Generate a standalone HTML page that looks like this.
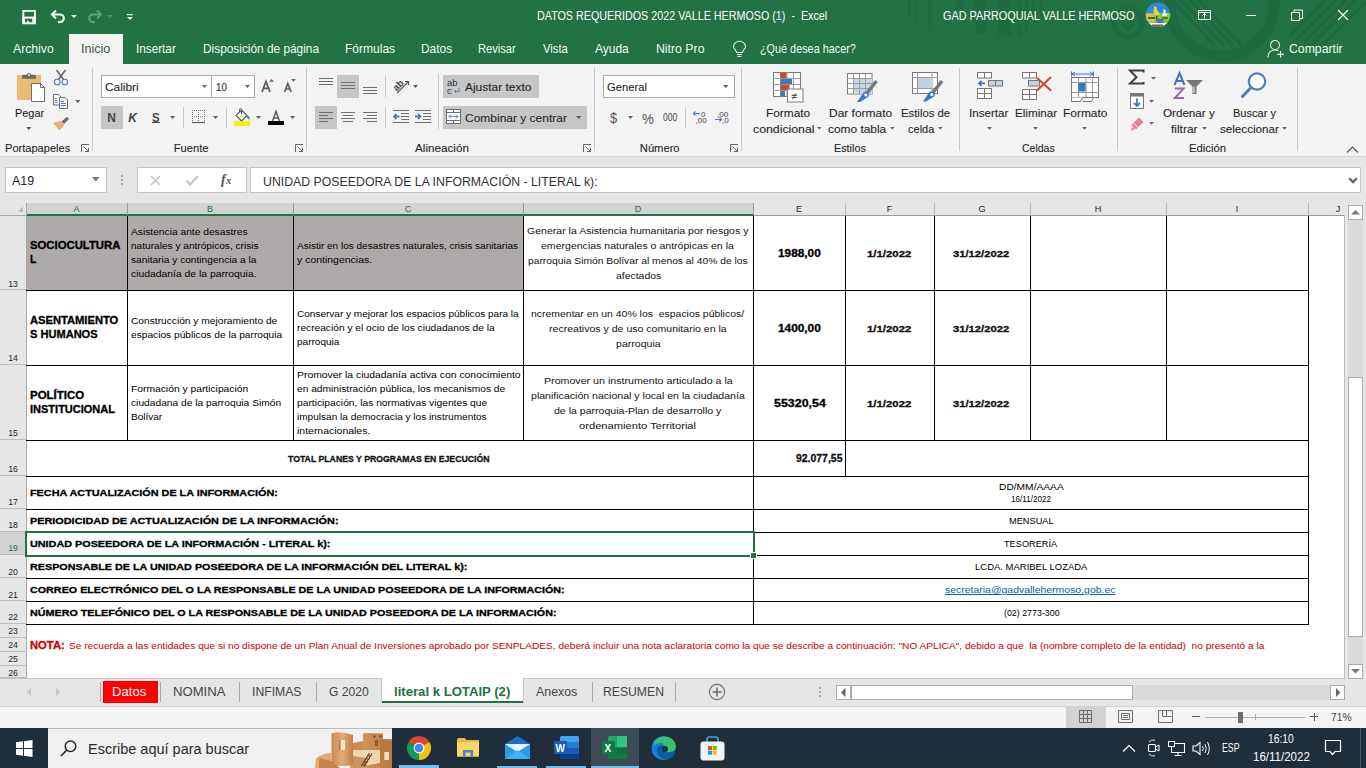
<!DOCTYPE html>
<html><head><meta charset="utf-8"><title>Excel</title>
<style>
*{margin:0;padding:0;box-sizing:border-box}
html,body{width:1366px;height:768px;overflow:hidden;background:#fff;font-family:"Liberation Sans",sans-serif}
.a{position:absolute}
.x{position:absolute;white-space:nowrap;line-height:1;transform-origin:0 0;font-family:"Liberation Sans",sans-serif}
.hl{position:absolute;height:1px;background:#000}
.vl{position:absolute;width:1px;background:#000}
.sep{position:absolute;width:1px;background:#c8c8c8}
.box{position:absolute;background:#fff;border:1px solid #c6c6c6}
.ch{position:absolute;top:203px;height:11px;border-right:1px solid #bdbdbd}
.rh{position:absolute;left:0;width:26px;background:#e6e6e6;border-bottom:1px solid #bdbdbd;border-right:1px solid #bdbdbd}
.cl{position:absolute;font-size:9px;line-height:1;color:#262626;text-align:center;font-family:"Liberation Sans",sans-serif}
.rn{position:absolute;left:0;width:26px;font-size:8.7px;line-height:1;color:#262626;text-align:center}
svg{position:absolute;overflow:visible}

</style></head><body>
<!-- title bar -->
<div class="a" style="left:0;top:0;width:1366px;height:64px;background:#217346"></div>
<div class="a" style="left:69px;top:34px;width:54px;height:30px;background:#f3f3f3"></div>

<!-- title pattern -->
<svg style="left:880px;top:0" width="486" height="64" viewBox="0 0 486 64">
 <g fill="#1e6a40" opacity="0.75">
  <rect x="28" y="0" width="3" height="15"/>
  <rect x="35" y="0" width="3" height="23"/>
  <rect x="48" y="0" width="4" height="31"/>
  <rect x="76" y="0" width="8" height="10"/>
  <path d="M95 0h12v28a6 6 0 0 1-12 0z"/>
  <rect x="118" y="0" width="13" height="36"/>
  <rect x="137" y="0" width="4" height="36"/>
  <rect x="145" y="0" width="3" height="30"/>
  <rect x="152" y="0" width="3" height="24"/>
  <rect x="160" y="0" width="3" height="18"/>
 </g>
 <g fill="none" stroke="#1e6a40" opacity="0.8">
  <circle cx="248" cy="23" r="14" stroke-width="5"/>
  <circle cx="248" cy="23" r="5" stroke-width="3"/>
  <circle cx="342" cy="4" r="52" stroke-width="11"/>
  <path d="M292 0 L335 46 M301 0 L344 46 M310 0 L353 46 M319 0 L362 46" stroke-width="3"/>
  <path d="M486 2 L444 44 M476 0 L432 44 M466 0 L424 42 M456 0 L416 40 M446 0 L410 36" stroke-width="3.5"/>
 </g>
</svg>
<!-- save -->
<svg style="left:21px;top:9px" width="16" height="16" viewBox="0 0 16 16">
 <path d="M2.3 1.9h11.6v12.4h-11.6z" fill="none" stroke="#fff" stroke-width="1.9"/>
 <rect x="1.5" y="7.6" width="13" height="2" fill="#fff"/>
 <rect x="1.5" y="9.5" width="2.5" height="4" fill="#fff"/>
 <rect x="11.3" y="9.5" width="3" height="4" fill="#fff"/>
 <rect x="5.8" y="11.8" width="2" height="2" fill="#fff"/>
</svg>
<!-- undo -->
<svg style="left:50px;top:9px" width="17" height="16" viewBox="0 0 17 16">
 <path d="M6 1.5 L2 5.5 L6 9.5 M2.5 5.5 H10 a3.8 3.8 0 0 1 0 7.6 H8" fill="none" stroke="#f2f8f4" stroke-width="2.1"/>
</svg>
<svg style="left:71px;top:15px" width="6" height="4" viewBox="0 0 6 4"><path d="M0 0h6l-3 3z" fill="#fff"/></svg>
<svg style="left:86px;top:9px" width="17" height="16" viewBox="0 0 17 16">
 <path d="M11 1.5 L15 5.5 L11 9.5 M14.5 5.5 H7 a3.8 3.8 0 0 0 0 7.6 H9" fill="none" stroke="#5e9e78" stroke-width="2.1"/>
</svg>
<svg style="left:107px;top:15px" width="6" height="4" viewBox="0 0 6 4"><path d="M0 0h6l-3 3z" fill="#4e8f68"/></svg>
<svg style="left:127px;top:13px" width="6" height="8" viewBox="0 0 6 8"><rect x="0" y="1" width="5.5" height="1.2" fill="#fff"/><path d="M0 4h6l-3 3z" fill="#fff"/></svg>
<!-- avatar -->
<svg style="left:1145px;top:2px" width="26" height="26" viewBox="0 0 26 26">
 <defs><clipPath id="av"><circle cx="13" cy="12.8" r="12.2"/></clipPath></defs>
 <g clip-path="url(#av)">
  <rect width="26" height="26" fill="#2f8ae6"/>
  <rect y="11" width="26" height="10" fill="#8cc43c"/>
  <path d="M0 12 Q6 10 10 14 L10 20 L0 20z" fill="#d9c04a"/>
  <path d="M9 4.5 L11.5 5 L12.5 9 L14.5 11 L14 13 L9 13 L8.5 9z" fill="#e8d23e"/>
  <path d="M19 7 L21 9 L20 11 L23 12 L21 14 L17 14 L18 11z" fill="#e8f4e0"/>
  <rect x="3" y="15" width="7" height="2" fill="#3d6a1e"/>
  <rect x="11" y="14" width="1.5" height="5" fill="#2f5e1a"/>
  <rect x="17" y="15" width="6" height="2" fill="#4f7a2a"/>
  <path d="M11 17 L19 17 L18 21 L12 21z" fill="#3d78c8"/>
  <rect y="21" width="26" height="6" fill="#f5f5f5"/>
  <rect x="7" y="22.5" width="11" height="2.5" fill="#8a5a4a"/>
 </g>
</svg>
<!-- ribbon display -->
<svg style="left:1197px;top:9px" width="15" height="12" viewBox="0 0 15 12">
 <path d="M1.5 1.5h12v9h-12z M1.5 3.5h12 M7.5 9.5v-5 M5.5 6.5l2-2 2 2" fill="none" stroke="#fff" stroke-width="1"/>
</svg>
<div class="a" style="left:1246px;top:15px;width:10px;height:1px;background:#fff"></div>
<svg style="left:1291px;top:9px" width="12" height="12" viewBox="0 0 12 12">
 <path d="M0.5 3.5h8v8h-8z M3 3.5v-2.5h8.5v8.5h-3" fill="none" stroke="#fff" stroke-width="1"/>
</svg>
<svg style="left:1337px;top:9px" width="12" height="12" viewBox="0 0 12 12">
 <path d="M1 1L11 11M11 1L1 11" stroke="#fff" stroke-width="1.1"/>
</svg>
<!-- lightbulb -->
<svg style="left:732px;top:41px" width="15" height="17" viewBox="0 0 15 17">
 <path d="M4.5 11.5 C4.5 9 1.5 8 1.5 5.5 A6 5.2 0 0 1 13.5 5.5 C13.5 8 10.5 9 10.5 11.5z M5 13.5h5 M5.5 15.5h4" fill="none" stroke="#e8f2ec" stroke-width="1.1"/>
</svg>
<!-- person -->
<svg style="left:1267px;top:39px" width="18" height="19" viewBox="0 0 18 19">
 <circle cx="8" cy="6" r="4.5" fill="none" stroke="#eef6f1" stroke-width="1.2"/>
 <path d="M1 18.5 C1 13.5 4 11 8 11 C9.5 11 10.5 11.3 11.5 11.8" fill="none" stroke="#eef6f1" stroke-width="1.2"/>
 <path d="M13.5 12v6.5 M10.3 15.3h6.5" stroke="#eef6f1" stroke-width="1.2"/>
</svg>

<!-- ribbon -->
<div class="a" style="left:0;top:64px;width:1366px;height:92px;background:#f3f3f3"></div>
<div class="a" style="left:0;top:156px;width:1366px;height:1px;background:#d6d6d6"></div>
<div class="sep" style="left:92px;top:68px;height:83px"></div>
<div class="sep" style="left:306px;top:68px;height:83px"></div>
<div class="sep" style="left:594px;top:68px;height:83px"></div>
<div class="sep" style="left:741px;top:68px;height:83px"></div>
<div class="sep" style="left:959px;top:68px;height:83px"></div>
<div class="sep" style="left:1117px;top:68px;height:83px"></div>
<div class="sep" style="left:1297px;top:68px;height:83px"></div>
<!-- ===== ribbon icons ===== -->
<!-- clipboard -->
<svg style="left:17px;top:71px" width="29" height="32" viewBox="0 0 29 32">
 <rect x="0" y="4" width="24" height="25" fill="#e6bd73"/>
 <path d="M5 7.8h14v-2.5a1.5 1.5 0 0 0-1.5-1.5h-3.2a2.4 2.4 0 0 0-4.6 0h-3.2a1.5 1.5 0 0 0-1.5 1.5z" fill="#6b6b6b"/>
 <circle cx="12" cy="4" r="1" fill="#f3f3f3"/>
 <path d="M14.5 12.5h9l4 4v14h-13z" fill="#fff" stroke="#6e6e6e" stroke-width="1"/>
 <path d="M23.5 12.5v4h4" fill="none" stroke="#6e6e6e" stroke-width="1"/>
</svg>
<svg style="left:26px;top:127px" width="6" height="4" viewBox="0 0 6 4"><path d="M0 0h5.5l-2.75 3z" fill="#5e5e5e"/></svg>
<!-- scissors -->
<svg style="left:53px;top:69px" width="16" height="17" viewBox="0 0 16 17">
 <path d="M3.5 1 L10.5 10.5 M12.5 1 L5.5 10.5" stroke="#6d6d6d" stroke-width="1.7"/>
 <circle cx="4.2" cy="13" r="2.8" fill="#f3f3f3" stroke="#4d7fbd" stroke-width="1.1"/>
 <circle cx="11.8" cy="13" r="2.8" fill="#f3f3f3" stroke="#4d7fbd" stroke-width="1.1"/>
</svg>
<!-- copy -->
<svg style="left:52px;top:93px" width="17" height="16" viewBox="0 0 17 16">
 <path d="M1.5 1.5h5l2 2v8.5h-7z" fill="#fff" stroke="#6e6e6e" stroke-width="1"/>
 <path d="M7.5 4.5h5.5l2.5 2.5v8.5h-8z" fill="#fff" stroke="#6e6e6e" stroke-width="1"/>
 <path d="M3 5.5h2M3 7.5h2.5M3 9.5h2.5M9 8.5h3M9 10.5h5M9 12.5h5" stroke="#4d7fbd" stroke-width="1"/>
</svg>
<svg style="left:75px;top:100px" width="6" height="4" viewBox="0 0 6 4"><path d="M0 0h5.5l-2.75 3z" fill="#5e5e5e"/></svg>
<!-- brush -->
<svg style="left:52px;top:116px" width="18" height="16" viewBox="0 0 18 16">
 <path d="M9.5 5.5 L15 0.8 L17 3 L12 8z" fill="#6b6b6b"/>
 <path d="M8.5 4.8 L12.5 8.8 L7.5 14.5 L1 7z" fill="#e3b46d"/>
</svg>
<!-- font boxes -->
<div class="box" style="left:101px;top:75px;width:111px;height:23px;border-color:#ababab"></div>
<div class="box" style="left:211px;top:75px;width:44px;height:23px;border-color:#ababab"></div>
<svg style="left:202px;top:85px" width="6" height="4" viewBox="0 0 6 4"><path d="M0 0h5l-2.5 3z" fill="#5e5e5e"/></svg>
<svg style="left:245px;top:85px" width="6" height="4" viewBox="0 0 6 4"><path d="M0 0h5l-2.5 3z" fill="#5e5e5e"/></svg>
<!-- grow/shrink A -->
<svg style="left:260px;top:78px" width="38" height="15" viewBox="0 0 38 15">
 <path d="M2 14 L6 3.5 L10 14 M3.5 10.3h5" fill="none" stroke="#5c5c5c" stroke-width="1.8"/>
 <path d="M9 3.8h5l-2.5-2.8z" fill="#4f6f97"/>
 <path d="M24.5 14 L27.8 5.5 L31.1 14 M25.8 11h4" fill="none" stroke="#5c5c5c" stroke-width="1.7"/>
 <path d="M31 1h5l-2.5 2.8z" fill="#4f6f97"/>
</svg>
<!-- N K S -->
<div class="a" style="left:101px;top:106px;width:22px;height:23px;background:#c6c6c6"></div>
<div class="x" style="left:107.2px;top:112.2px;font-size:12px;font-weight:700;color:#444">N</div>
<div class="x" style="left:128.3px;top:112.2px;font-size:12px;font-weight:700;font-style:italic;color:#444">K</div>
<div class="x" style="left:152.2px;top:112.2px;font-size:12px;font-weight:700;color:#444;transform:scaleX(0.95)">S</div>
<div class="a" style="left:152px;top:122px;width:8px;height:1px;background:#444"></div>
<svg style="left:170px;top:116px" width="6" height="4" viewBox="0 0 6 4"><path d="M0 0h5l-2.5 3z" fill="#5e5e5e"/></svg>
<div class="sep" style="left:183px;top:107px;height:21px"></div>
<!-- border icon -->
<svg style="left:191px;top:109px" width="15" height="15" viewBox="0 0 15 15">
 <path d="M1.5 1V12M7.5 1V12M13.5 1V12M1 1.5H14M1 7.5H14" stroke="#777" stroke-width="1" stroke-dasharray="1 1"/>
 <path d="M1 13.5H14" stroke="#5c5c5c" stroke-width="1.2"/>
</svg>
<svg style="left:213px;top:116px" width="6" height="4" viewBox="0 0 6 4"><path d="M0 0h5l-2.5 3z" fill="#5e5e5e"/></svg>
<div class="sep" style="left:226px;top:107px;height:21px"></div>
<!-- fill icon -->
<svg style="left:233px;top:108px" width="19" height="19" viewBox="0 0 19 19">
 <path d="M8.5 2 L14 7.5 L8.5 13 L3 7.5z" fill="#fff" stroke="#555" stroke-width="1.1"/>
 <path d="M6.5 4V1.5a1 1 0 0 1 2 0V6" fill="none" stroke="#555" stroke-width="1"/>
 <path d="M14 7 Q17.5 8.5 16.5 12 Q15 10.5 14 10z" fill="#4d7fbd"/>
 <rect x="1" y="13" width="16" height="5" fill="#f2f20a"/>
</svg>
<svg style="left:256px;top:116px" width="6" height="4" viewBox="0 0 6 4"><path d="M0 0h5l-2.5 3z" fill="#5e5e5e"/></svg>
<!-- font color -->
<svg style="left:267px;top:110px" width="18" height="16" viewBox="0 0 18 16">
 <path d="M5.5 11 L9 1.5 L12.5 11 M6.8 8h4.4" fill="none" stroke="#5c5c5c" stroke-width="1.5"/>
 <rect x="1" y="11" width="16" height="4" fill="#000"/>
</svg>
<svg style="left:290px;top:116px" width="6" height="4" viewBox="0 0 6 4"><path d="M0 0h5l-2.5 3z" fill="#5e5e5e"/></svg>
<!-- dialog launchers -->
<svg style="left:81px;top:144px" width="9" height="9" viewBox="0 0 9 9"><path d="M0.5 8V0.5H8 M2.5 2.5L7.5 7.5 M4 7.5H7.5V4" fill="none" stroke="#666" stroke-width="1"/></svg>
<svg style="left:295px;top:144px" width="9" height="9" viewBox="0 0 9 9"><path d="M0.5 8V0.5H8 M2.5 2.5L7.5 7.5 M4 7.5H7.5V4" fill="none" stroke="#666" stroke-width="1"/></svg>
<svg style="left:583px;top:144px" width="9" height="9" viewBox="0 0 9 9"><path d="M0.5 8V0.5H8 M2.5 2.5L7.5 7.5 M4 7.5H7.5V4" fill="none" stroke="#666" stroke-width="1"/></svg>
<svg style="left:730px;top:144px" width="9" height="9" viewBox="0 0 9 9"><path d="M0.5 8V0.5H8 M2.5 2.5L7.5 7.5 M4 7.5H7.5V4" fill="none" stroke="#666" stroke-width="1"/></svg>
<!-- alignment -->
<div class="a" style="left:337px;top:75px;width:22px;height:23px;background:#c6c6c6"></div>
<div class="a" style="left:315px;top:106px;width:22px;height:23px;background:#c6c6c6"></div>
<svg style="left:318px;top:77px" width="62" height="18" viewBox="0 0 62 18">
 <g stroke="#6e6e6e" stroke-width="1">
 <path d="M1 1.5h14M1 4.5h14M1 7.5h14"/>
 <path d="M23 5.5h14M23 8.5h14M23 11.5h14"/>
 <path d="M45 10.5h14M45 13.5h14M45 16.5h14"/>
 </g>
</svg>
<svg style="left:318px;top:111px" width="62" height="12" viewBox="0 0 62 12">
 <g stroke="#6e6e6e" stroke-width="1">
 <path d="M1 1.5h14M1 4.5h9M1 7.5h14M1 10.5h9"/>
 <path d="M23 1.5h14M25 4.5h10M23 7.5h14M25 10.5h10"/>
 <path d="M45 1.5h14M49 4.5h10M45 7.5h14M49 10.5h10"/>
 </g>
</svg>
<div class="sep" style="left:385px;top:76px;height:21px"></div>
<div class="sep" style="left:385px;top:107px;height:21px"></div>
<!-- orientation -->
<svg style="left:392px;top:78px" width="27" height="16" viewBox="0 0 27 16">
 <text x="0" y="0" transform="translate(4.5 13.5) rotate(-45)" font-family="Liberation Sans" font-size="9.5" font-weight="700" fill="#444">ab</text>
 <path d="M5 15 L16 4 M13 3.5h3.5v3.5" fill="none" stroke="#555" stroke-width="1.1"/>
 <path d="M21 7h5l-2.5 3z" fill="#5e5e5e"/>
</svg>
<!-- indents -->
<svg style="left:392px;top:109px" width="40" height="15" viewBox="0 0 40 15">
 <g stroke="#6e6e6e" stroke-width="1"><path d="M1 1.5h16M9 4.5h8M9 7.5h8M9 10.5h8M1 13.5h16"/><path d="M23 1.5h16M31 4.5h8M31 7.5h8M31 10.5h8M23 13.5h16"/></g>
 <path d="M7.5 7.5H2 M4.5 5 L2 7.5 L4.5 10" fill="none" stroke="#4d7fbd" stroke-width="1.8"/>
 <path d="M23 7.5H28.5 M26 5 L28.5 7.5 L26 10" fill="none" stroke="#4d7fbd" stroke-width="1.8"/>
</svg>
<div class="sep" style="left:438px;top:74px;height:55px"></div>
<!-- ajustar / combinar -->
<div class="a" style="left:443px;top:75px;width:96px;height:23px;background:#c6c6c6"></div>
<div class="a" style="left:443px;top:106px;width:144px;height:23px;background:#c6c6c6"></div>
<svg style="left:447px;top:78px" width="14" height="17" viewBox="0 0 14 17">
 <text x="0" y="7.5" font-family="Liberation Sans" font-size="9.5" fill="#333">ab</text>
 <text x="0" y="15.5" font-family="Liberation Sans" font-size="9.5" fill="#333">c</text>
 <path d="M12 10v3.5H7.5 M9 12l-1.5 1.5L9 15" fill="none" stroke="#4d7fbd" stroke-width="0.9"/>
</svg>
<svg style="left:446px;top:109px" width="15" height="15" viewBox="0 0 15 15">
 <rect x="0.5" y="0.5" width="14" height="14" fill="#fff" stroke="#6e6e6e"/>
 <path d="M0.5 3.5h14M0.5 11.5h14M7.5 0.5v3M7.5 11.5v3" stroke="#6e6e6e"/>
 <path d="M3 7.5h9M5 5.5l-2 2 2 2M10 5.5l2 2-2 2" fill="none" stroke="#4d7fbd" stroke-width="0.9"/>
</svg>
<svg style="left:576px;top:116px" width="6" height="4" viewBox="0 0 6 4"><path d="M0 0h5.5l-2.75 3z" fill="#5e5e5e"/></svg>
<!-- numero -->
<div class="box" style="left:603px;top:75px;width:132px;height:23px;border-color:#ababab"></div>
<svg style="left:723px;top:85px" width="6" height="4" viewBox="0 0 6 4"><path d="M0 0h5.5l-2.75 3z" fill="#5e5e5e"/></svg>
<div class="x" style="left:609.5px;top:110px;font-size:15px;color:#555;transform:scaleX(0.85)">$</div>
<svg style="left:628px;top:116px" width="6" height="4" viewBox="0 0 6 4"><path d="M0 0h5l-2.5 3z" fill="#5e5e5e"/></svg>
<div class="x" style="left:641.5px;top:111.5px;font-size:14px;color:#555;transform:scaleX(0.95)">%</div>
<div class="x" style="left:662.5px;top:112.5px;font-size:10px;color:#444;transform:scaleX(0.85)">000</div>
<div class="sep" style="left:685px;top:107px;height:21px"></div>
<svg style="left:692px;top:109px" width="40" height="16" viewBox="0 0 40 16">
 <text x="9" y="7.5" font-family="Liberation Sans" font-size="8" fill="#444">0</text>
 <text x="3.5" y="14" font-family="Liberation Sans" font-size="8" fill="#444">,00</text>
 <path d="M8 4.5H1.5M3.5 2.5L1.5 4.5L3.5 6.5" fill="none" stroke="#4d7fbd" stroke-width="1.2"/>
 <text x="25" y="7.5" font-family="Liberation Sans" font-size="8" fill="#444">,00</text>
 <text x="30" y="14" font-family="Liberation Sans" font-size="8" fill="#444">,0</text>
 <path d="M23 10.5H29.5M27.5 8.5L29.5 10.5L27.5 12.5" fill="none" stroke="#4d7fbd" stroke-width="1.2"/>
</svg>
<!-- formato condicional -->
<svg style="left:773px;top:71px" width="31" height="32" viewBox="0 0 31 32">
 <rect x="0.5" y="1.5" width="27" height="24" fill="#fff" stroke="#7a7a7a"/>
 <path d="M7.5 1.5v24M14 1.5v24M20.5 1.5v24M0.5 7.5h27M0.5 13.5h27M0.5 19.5h27" stroke="#9a9a9a"/>
 <rect x="7.5" y="2" width="6" height="5" fill="#d24726"/>
 <rect x="7.5" y="8" width="11.5" height="5" fill="#3d77c2"/>
 <rect x="7.5" y="14" width="9" height="5" fill="#d24726"/>
 <rect x="7.5" y="20" width="4.5" height="5" fill="#3d77c2"/>
 <rect x="14.5" y="18" width="15.5" height="13" fill="#fff" stroke="#7a7a7a"/>
 <text x="18" y="28.5" font-family="Liberation Sans" font-size="11" fill="#333">≠</text>
</svg>
<svg style="left:817px;top:127px" width="6" height="4" viewBox="0 0 6 4"><path d="M0 0h4.5l-2.25 2.5z" fill="#666"/></svg>
<!-- dar formato como tabla -->
<svg style="left:847px;top:73px" width="32" height="30" viewBox="0 0 32 30">
 <rect x="0.5" y="0.5" width="24.5" height="20.5" fill="#fff" stroke="#7a7a7a"/>
 <rect x="6.5" y="5.5" width="18.5" height="15.5" fill="#c9d6e6"/>
 <path d="M6.5 0.5v20.5M12.5 0.5v20.5M18.5 0.5v20.5M0.5 5.5h24.5M0.5 10.5h24.5M0.5 15.5h24.5" stroke="#9a9a9a"/>
 <path d="M20 20 L29.5 8" stroke="#777" stroke-width="3.4"/>
 <path d="M16.5 19.5 a3.2 3.2 0 0 1 4.5 4.5 L13 29 L10 29z" fill="#3d77c2"/>
 <circle cx="18.8" cy="22" r="1.5" fill="#fff"/>
</svg>
<svg style="left:890px;top:127px" width="6" height="4" viewBox="0 0 6 4"><path d="M0 0h4.5l-2.25 2.5z" fill="#666"/></svg>
<!-- estilos de celda -->
<svg style="left:912px;top:71px" width="32" height="32" viewBox="0 0 32 32">
 <rect x="0.5" y="1.5" width="25" height="21" fill="#fff" stroke="#7a7a7a"/>
 <path d="M5.5 1.5v21M20 1.5v21M0.5 6.5h25M0.5 17.5h25" stroke="#9a9a9a"/>
 <rect x="6" y="7" width="13.5" height="10" fill="#c2d2e6"/>
 <path d="M21 21.5 L30 10" stroke="#777" stroke-width="3.4"/>
 <path d="M17.5 21 a3.2 3.2 0 0 1 4.5 4.5 L14 30.5 L11 30.5z" fill="#3d77c2"/>
 <circle cx="19.8" cy="23.5" r="1.5" fill="#fff"/>
</svg>
<svg style="left:938px;top:127px" width="6" height="4" viewBox="0 0 6 4"><path d="M0 0h4.5l-2.25 2.5z" fill="#666"/></svg>
<!-- insertar -->
<svg style="left:976px;top:71px" width="28" height="29" viewBox="0 0 28 29">
 <g fill="#fff" stroke="#777"><rect x="1.5" y="1.5" width="14" height="5.5"/><rect x="1.5" y="17.5" width="14" height="10"/></g>
 <path d="M8.5 1.5v5.5M8.5 17.5v10M1.5 22.5h14" stroke="#777"/>
 <rect x="12.5" y="9.5" width="14" height="5.5" fill="#c5d3e4" stroke="#777"/>
 <path d="M19.5 9.5v5.5" stroke="#777"/>
 <path d="M9 12.3H3M5.5 9.8L3 12.3L5.5 14.8" fill="none" stroke="#3d77c2" stroke-width="1.8"/>
</svg>
<svg style="left:987px;top:127px" width="6" height="4" viewBox="0 0 6 4"><path d="M0 0h5l-2.5 2.8z" fill="#666"/></svg>
<!-- eliminar -->
<svg style="left:1021px;top:71px" width="32" height="30" viewBox="0 0 32 30">
 <g fill="#fff" stroke="#777"><rect x="1.5" y="1.5" width="14" height="5.5"/><rect x="1.5" y="18.5" width="14" height="10"/></g>
 <path d="M8.5 1.5v5.5M8.5 18.5v10M1.5 23.5h14" stroke="#777"/>
 <rect x="7.5" y="9.5" width="11" height="5.5" fill="#c5d3e4" stroke="#777"/>
 <path d="M16 7 L30 19.5 M30 6 L16 19.5" stroke="#d24726" stroke-width="2"/>
</svg>
<svg style="left:1033px;top:127px" width="6" height="4" viewBox="0 0 6 4"><path d="M0 0h5l-2.5 2.8z" fill="#666"/></svg>
<!-- formato -->
<svg style="left:1070px;top:70px" width="30" height="33" viewBox="0 0 30 33">
 <path d="M1.5 1.5v5M23.5 1.5v5M2 4H23M5 2l-3 2 3 2M20 2l3 2-3 2" fill="none" stroke="#3d77c2" stroke-width="1"/>
 <rect x="1.5" y="7.5" width="27" height="20" fill="#fff" stroke="#777"/>
 <path d="M8.5 7.5v20M16 7.5v20M22.5 7.5v20M1.5 12.5h27M1.5 22.5h27" stroke="#9a9a9a"/>
 <rect x="8.5" y="13" width="7" height="8.5" fill="#3d77c2"/>
 <path d="M1.5 27.5v4h9l2-4M12.5 31.5h9l2-4" fill="#fff" stroke="#777"/>
</svg>
<svg style="left:1082px;top:127px" width="6" height="4" viewBox="0 0 6 4"><path d="M0 0h5l-2.5 2.8z" fill="#666"/></svg>
<!-- edicion -->
<svg style="left:1128px;top:69px" width="17" height="17" viewBox="0 0 17 17">
 <path d="M15.5 3.5V1.5H2L8.5 8.2L2 14.5H15.5V13" fill="none" stroke="#404040" stroke-width="2"/>
</svg>
<svg style="left:1151px;top:77px" width="6" height="4" viewBox="0 0 6 4"><path d="M0 0h5l-2.5 2.8z" fill="#666"/></svg>
<svg style="left:1129px;top:92px" width="16" height="18" viewBox="0 0 16 18">
 <rect x="1.5" y="1.5" width="13" height="15" fill="#fff" stroke="#777"/>
 <rect x="1" y="1" width="14" height="3.5" fill="#777"/>
 <path d="M8 6.5V14M5 11l3 3 3-3" fill="none" stroke="#3d77c2" stroke-width="1.8"/>
</svg>
<svg style="left:1149px;top:100px" width="6" height="4" viewBox="0 0 6 4"><path d="M0 0h5l-2.5 2.8z" fill="#666"/></svg>
<svg style="left:1129px;top:116px" width="16" height="15" viewBox="0 0 16 15">
 <path d="M10 1.5 L14.5 6 L7 13.5 L2.5 9z" fill="#e67f95"/>
 <path d="M5 11.5 L2.5 14" stroke="#e67f95" stroke-width="2"/>
 <path d="M4.5 7 L9 11.5" stroke="#f3f3f3" stroke-width="1"/>
</svg>
<svg style="left:1149px;top:122px" width="6" height="4" viewBox="0 0 6 4"><path d="M0 0h5l-2.5 2.8z" fill="#666"/></svg>
<!-- AZ -->
<svg style="left:1172px;top:71px" width="33" height="30" viewBox="0 0 33 30">
 <path d="M2.5 14 L7.5 2 L12.5 14 M4.2 10h6.6" fill="none" stroke="#3d77c2" stroke-width="2"/>
 <path d="M3 17.5h8.5L3 27h9" fill="none" stroke="#a066b5" stroke-width="2"/>
 <path d="M14 9h17l-6.5 6.5v7.5h-4v-7.5z" fill="#777"/>
 <path d="M22 15.5v6.5" stroke="#f3f3f3" stroke-width="1"/>
</svg>
<svg style="left:1202px;top:127px" width="6" height="4" viewBox="0 0 6 4"><path d="M0 0h5l-2.5 2.8z" fill="#666"/></svg>
<!-- magnifier -->
<svg style="left:1239px;top:70px" width="30" height="30" viewBox="0 0 30 30">
 <circle cx="18" cy="11.5" r="8.2" fill="#fff" stroke="#4d7fbd" stroke-width="2.2"/>
 <path d="M12 17.5 L3.5 26.5" stroke="#4d7fbd" stroke-width="3" stroke-linecap="round"/>
</svg>
<svg style="left:1282px;top:127px" width="6" height="4" viewBox="0 0 6 4"><path d="M0 0h5l-2.5 2.8z" fill="#666"/></svg>
<svg style="left:1346px;top:146px" width="13" height="7" viewBox="0 0 13 7"><path d="M1 6.5 L6.5 1 L12 6.5" fill="none" stroke="#555" stroke-width="1.1"/></svg>

<!-- formula bar -->
<div class="a" style="left:0;top:157px;width:1366px;height:46px;background:#e6e6e6"></div>
<div class="box" style="left:5px;top:167px;width:102px;height:26px"></div>
<div class="box" style="left:137px;top:167px;width:110px;height:26px"></div>
<div class="box" style="left:250px;top:167px;width:1111px;height:26px"></div>
<!-- column headers -->
<div class="a" style="left:0;top:203px;width:1366px;height:13px;background:#e6e6e6"></div>
<div class="a" style="left:26px;top:203px;width:727px;height:11px;background:#d2d2d2"></div>
<div class="a" style="left:26px;top:215px;width:1318px;height:1px;background:#9b9b9b"></div>
<div class="a" style="left:26px;top:214px;width:728px;height:2px;background:#217346"></div>
<!-- grid -->
<div class="a" style="left:26px;top:216px;width:1318px;height:462px;background:#fff"></div>
<div class="a" style="left:0;top:216px;width:26px;height:462px;background:#e6e6e6"></div>
<div class="a" style="left:26px;top:203px;width:1px;height:475px;background:#a8a8a8"></div>
<div class="a" style="left:0;top:215px;width:26px;height:1px;background:#a8a8a8"></div>
<div class="a" style="left:27px;top:216px;width:496px;height:74px;background:#aeaaaa"></div>
<div class="vl" style="left:127px;top:216px;height:225px"></div>
<div class="vl" style="left:293px;top:216px;height:225px"></div>
<div class="vl" style="left:523px;top:216px;height:225px"></div>
<div class="vl" style="left:753px;top:216px;height:225px"></div>
<div class="vl" style="left:845px;top:216px;height:225px"></div>
<div class="vl" style="left:934px;top:216px;height:225px"></div>
<div class="vl" style="left:1030px;top:216px;height:225px"></div>
<div class="vl" style="left:1166px;top:216px;height:225px"></div>
<div class="vl" style="left:1308px;top:216px;height:225px"></div>
<div class="vl" style="left:753px;top:440px;height:37px"></div>
<div class="vl" style="left:845px;top:440px;height:37px"></div>
<div class="vl" style="left:1308px;top:440px;height:37px"></div>
<div class="vl" style="left:753px;top:476px;height:149px"></div>
<div class="vl" style="left:1308px;top:476px;height:149px"></div>
<div class="hl" style="left:26px;top:290px;width:1283px"></div>
<div class="hl" style="left:26px;top:365px;width:1283px"></div>
<div class="hl" style="left:26px;top:440px;width:1283px"></div>
<div class="hl" style="left:26px;top:476px;width:1283px"></div>
<div class="hl" style="left:26px;top:509px;width:1283px"></div>
<div class="hl" style="left:26px;top:532px;width:1283px"></div>
<div class="hl" style="left:26px;top:555px;width:1283px"></div>
<div class="hl" style="left:26px;top:578px;width:1283px"></div>
<div class="hl" style="left:26px;top:601px;width:1283px"></div>
<div class="hl" style="left:26px;top:624px;width:1283px"></div>
<div class="rh" style="top:216px;height:74px;background:#e6e6e6;width:26px;border-right:none"></div>
<div class="rn" style="top:279.5px;color:#262626">13</div>
<div class="rh" style="top:290px;height:75px;background:#e6e6e6;width:26px;border-right:none"></div>
<div class="rn" style="top:354.1px;color:#262626">14</div>
<div class="rh" style="top:365px;height:75px;background:#e6e6e6;width:26px;border-right:none"></div>
<div class="rn" style="top:429.3px;color:#262626">15</div>
<div class="rh" style="top:440px;height:36px;background:#e6e6e6;width:26px;border-right:none"></div>
<div class="rn" style="top:465.4px;color:#262626">16</div>
<div class="rh" style="top:476px;height:33px;background:#e6e6e6;width:26px;border-right:none"></div>
<div class="rn" style="top:498.2px;color:#262626">17</div>
<div class="rh" style="top:509px;height:23px;background:#e6e6e6;width:26px;border-right:none"></div>
<div class="rn" style="top:521.0px;color:#262626">18</div>
<div class="rh" style="top:532px;height:23px;background:#d2d2d2;width:26px;border-right:none"></div>
<div class="rn" style="top:543.7px;color:#217346">19</div>
<div class="rh" style="top:555px;height:23px;background:#e6e6e6;width:26px;border-right:none"></div>
<div class="rn" style="top:567.5px;color:#262626">20</div>
<div class="rh" style="top:578px;height:23px;background:#e6e6e6;width:26px;border-right:none"></div>
<div class="rn" style="top:590.5px;color:#262626">21</div>
<div class="rh" style="top:601px;height:23px;background:#e6e6e6;width:26px;border-right:none"></div>
<div class="rn" style="top:613.3px;color:#262626">22</div>
<div class="rh" style="top:624px;height:14px;background:#e6e6e6;width:26px;border-right:none"></div>
<div class="rn" style="top:627.3px;color:#262626">23</div>
<div class="rh" style="top:638px;height:14px;background:#e6e6e6;width:26px;border-right:none"></div>
<div class="rn" style="top:641.4px;color:#262626">24</div>
<div class="rh" style="top:652px;height:14px;background:#e6e6e6;width:26px;border-right:none"></div>
<div class="rn" style="top:655.4px;color:#262626">25</div>
<div class="rh" style="top:666px;height:12px;background:#e6e6e6;width:26px;border-right:none"></div>
<div class="rn" style="top:668.7px;color:#262626">26</div>
<div class="a" style="left:127px;top:203px;width:1px;height:12px;background:#9c9c9c"></div>
<div class="cl" style="left:26px;width:101px;top:205px;color:#217346">A</div>
<div class="a" style="left:293px;top:203px;width:1px;height:12px;background:#9c9c9c"></div>
<div class="cl" style="left:127px;width:166px;top:205px;color:#217346">B</div>
<div class="a" style="left:523px;top:203px;width:1px;height:12px;background:#9c9c9c"></div>
<div class="cl" style="left:293px;width:230px;top:205px;color:#217346">C</div>
<div class="a" style="left:753px;top:203px;width:1px;height:12px;background:#9c9c9c"></div>
<div class="cl" style="left:523px;width:230px;top:205px;color:#217346">D</div>
<div class="a" style="left:845px;top:203px;width:1px;height:12px;background:#bababa"></div>
<div class="cl" style="left:753px;width:92px;top:205px;color:#262626">E</div>
<div class="a" style="left:934px;top:203px;width:1px;height:12px;background:#bababa"></div>
<div class="cl" style="left:845px;width:89px;top:205px;color:#262626">F</div>
<div class="a" style="left:1030px;top:203px;width:1px;height:12px;background:#bababa"></div>
<div class="cl" style="left:934px;width:96px;top:205px;color:#262626">G</div>
<div class="a" style="left:1166px;top:203px;width:1px;height:12px;background:#bababa"></div>
<div class="cl" style="left:1030px;width:136px;top:205px;color:#262626">H</div>
<div class="a" style="left:1308px;top:203px;width:1px;height:12px;background:#bababa"></div>
<div class="cl" style="left:1166px;width:142px;top:205px;color:#262626">I</div>
<div class="cl" style="left:1330px;width:16px;top:205px;color:#262626">J</div>
<!-- sheet tabs -->
<div class="a" style="left:0;top:678px;width:1366px;height:28px;background:#e6e6e6"></div>
<div class="a" style="left:0;top:678px;width:1345px;height:1px;background:#c6c6c6"></div>
<div class="a" style="left:103px;top:681px;width:55px;height:22px;background:#ff0000"></div>
<div class="a" style="left:381px;top:678px;width:143px;height:25px;background:#fff;border-left:1px solid #c6c6c6;border-right:1px solid #c6c6c6"></div>
<div class="a" style="left:382px;top:701px;width:141px;height:2px;background:#217346"></div>
<div class="a" style="left:0;top:706px;width:1366px;height:1px;background:#d0d0d0"></div>
<!-- status -->
<div class="a" style="left:0;top:707px;width:1366px;height:21px;background:#f3f3f3"></div>
<div class="a" style="left:1066px;top:706px;width:40px;height:22px;background:#d2d2d2"></div>
<!-- taskbar -->
<div class="a" style="left:0;top:728px;width:1366px;height:40px;background:#1f2e39"></div>
<div class="a" style="left:48px;top:729px;width:344px;height:39px;background:#f0f0f0"></div>
<div class="a" style="left:591px;top:728px;width:48px;height:40px;background:#3d4b55"></div>

<!-- formula bar icons -->
<svg style="left:92px;top:177px" width="8" height="5" viewBox="0 0 8 5"><path d="M0 0h7.5l-3.75 4.5z" fill="#777"/></svg>
<div class="a" style="left:121px;top:175px;width:2px;height:2px;background:#aaa"></div>
<div class="a" style="left:121px;top:179px;width:2px;height:2px;background:#aaa"></div>
<div class="a" style="left:121px;top:183px;width:2px;height:2px;background:#aaa"></div>
<svg style="left:149px;top:175px" width="13" height="11" viewBox="0 0 13 11"><path d="M2 1L11 10M11 1L2 10" stroke="#c4c4c4" stroke-width="1.6"/></svg>
<svg style="left:185px;top:175px" width="15" height="11" viewBox="0 0 15 11"><path d="M1.5 5.5L5 9.5L13 1" fill="none" stroke="#c4c4c4" stroke-width="2"/></svg>
<svg style="left:220px;top:172px" width="16" height="16" viewBox="0 0 16 16"><text x="1" y="12" font-family="Liberation Serif" font-style="italic" font-weight="700" font-size="14" fill="#555">f</text><text x="6.3" y="12" font-family="Liberation Serif" font-style="italic" font-weight="700" font-size="10" fill="#555">x</text></svg>
<svg style="left:1348px;top:177px" width="10" height="7" viewBox="0 0 10 7"><path d="M1.2 1.2L5 5L8.8 1.2" fill="none" stroke="#666" stroke-width="2.3"/></svg>
<!-- corner -->
<svg style="left:17px;top:206px" width="7" height="7" viewBox="0 0 7 7"><path d="M6 0.5V6H0.5z" fill="#bdbdbd"/></svg>
<!-- grid right border -->
<div class="a" style="left:1344px;top:215px;width:1px;height:463px;background:#bdbdbd"></div>
<div class="a" style="left:1345px;top:203px;width:21px;height:475px;background:#e6e6e6"></div>
<!-- vertical scrollbar -->
<div class="a" style="left:1348px;top:205px;width:15px;height:473px;background:#dadada"></div>
<div class="a" style="left:1348px;top:205px;width:15px;height:15px;background:#fff;border:1px solid #ababab"></div>
<svg style="left:1351px;top:210px" width="9" height="5" viewBox="0 0 9 5"><path d="M0 4.5h9l-4.5-4.5z" fill="#777"/></svg>
<div class="a" style="left:1348px;top:377px;width:15px;height:260px;background:#fff;border:1px solid #ababab"></div>
<div class="a" style="left:1348px;top:664px;width:15px;height:15px;background:#fff;border:1px solid #ababab"></div>
<svg style="left:1351px;top:669px" width="9" height="5" viewBox="0 0 9 5"><path d="M0 0h9l-4.5 4.5z" fill="#777"/></svg>
<!-- sheet tab extras -->
<svg style="left:27px;top:688px" width="4" height="8" viewBox="0 0 4 8"><path d="M4 0v8L0 4z" fill="#c6c6c6"/></svg>
<svg style="left:56px;top:688px" width="4" height="8" viewBox="0 0 4 8"><path d="M0 0v8L4 4z" fill="#c6c6c6"/></svg>
<div class="a" style="left:100px;top:682px;width:1px;height:20px;background:#aaa"></div>
<div class="a" style="left:160px;top:682px;width:1px;height:20px;background:#aaa"></div>
<div class="a" style="left:239px;top:682px;width:1px;height:20px;background:#aaa"></div>
<div class="a" style="left:316px;top:682px;width:1px;height:20px;background:#aaa"></div>
<div class="a" style="left:592px;top:682px;width:1px;height:20px;background:#aaa"></div>
<div class="a" style="left:675px;top:682px;width:1px;height:20px;background:#aaa"></div>
<svg style="left:708px;top:683px" width="18" height="18" viewBox="0 0 18 18"><circle cx="9" cy="9" r="7.6" fill="none" stroke="#6e6e6e" stroke-width="1.1"/><path d="M9 4.5v9M4.5 9h9" stroke="#6e6e6e" stroke-width="1.6"/></svg>
<div class="a" style="left:819px;top:687px;width:2px;height:2px;background:#aaa"></div>
<div class="a" style="left:819px;top:691px;width:2px;height:2px;background:#aaa"></div>
<div class="a" style="left:819px;top:695px;width:2px;height:2px;background:#aaa"></div>
<!-- horizontal scrollbar -->
<div class="a" style="left:836px;top:685px;width:509px;height:15px;background:#dadada"></div>
<div class="a" style="left:836px;top:685px;width:15px;height:15px;background:#fff;border:1px solid #ababab"></div>
<svg style="left:841px;top:688px" width="5" height="9" viewBox="0 0 5 9"><path d="M4.5 0v9L0 4.5z" fill="#666"/></svg>
<div class="a" style="left:851px;top:685px;width:282px;height:15px;background:#fff;border:1px solid #ababab"></div>
<div class="a" style="left:1330px;top:685px;width:15px;height:15px;background:#fff;border:1px solid #ababab"></div>
<svg style="left:1336px;top:688px" width="5" height="9" viewBox="0 0 5 9"><path d="M0 0v9L4.5 4.5z" fill="#666"/></svg>
<!-- status bar icons -->
<svg style="left:1078px;top:709px" width="15" height="15" viewBox="0 0 15 15"><path d="M1.5 1.5h12v12h-12z M5.5 1.5v12M9.5 1.5v12M1.5 5.5h12M1.5 9.5h12" fill="none" stroke="#6e6e6e" stroke-width="1"/></svg>
<svg style="left:1118px;top:710px" width="16" height="14" viewBox="0 0 16 14"><path d="M0.5 0.5h14v12h-14z M3.5 3.5h8v6h-8z M5 5.5h5M5 7.5h5" fill="none" stroke="#6e6e6e" stroke-width="1"/></svg>
<svg style="left:1158px;top:710px" width="16" height="14" viewBox="0 0 16 14"><path d="M0.5 0.5h14v12h-14z M4.5 0.5v6h9 M8.5 0.5v6" fill="none" stroke="#6e6e6e" stroke-width="1"/></svg>
<div class="a" style="left:1192px;top:716px;width:8px;height:1px;background:#555"></div>
<div class="a" style="left:1205px;top:717px;width:100px;height:1px;background:#b0b0b0"></div>
<div class="a" style="left:1255px;top:714px;width:1px;height:6px;background:#b0b0b0"></div>
<div class="a" style="left:1238px;top:712px;width:5px;height:11px;background:#6e6e6e"></div>
<div class="a" style="left:1310px;top:716px;width:8px;height:1px;background:#555"></div>
<div class="a" style="left:1313.5px;top:712.5px;width:1px;height:8px;background:#555"></div>
<!-- taskbar -->
<svg style="left:16px;top:740px" width="17" height="17" viewBox="0 0 17 17"><path d="M0 2.3L7 1.3V8H0z M8 1.2L16.5 0V8H8z M0 9H7V15.7L0 14.7z M8 9H16.5V17L8 15.8z" fill="#fff"/></svg>
<svg style="left:60px;top:740px" width="17" height="17" viewBox="0 0 17 17"><circle cx="10.5" cy="6.3" r="5.3" fill="none" stroke="#222" stroke-width="1.4"/><path d="M6.8 10L1 16" stroke="#222" stroke-width="1.6"/></svg>
<!-- adobe image -->
<div class="a" style="left:48px;top:728px;width:344px;height:1px;background:#b9b9b9"></div>
<svg style="left:310px;top:728px" width="82" height="40" viewBox="0 0 82 40">
 <defs>
  <linearGradient id="tw" x1="0" x2="1"><stop offset="0" stop-color="#c98a4f"/><stop offset="0.5" stop-color="#e2ad74"/><stop offset="1" stop-color="#c18149"/></linearGradient>
  <linearGradient id="bd" x1="0" x2="1"><stop offset="0" stop-color="#d7a06a"/><stop offset="1" stop-color="#b97a43"/></linearGradient>
 </defs>
 <path d="M43 15 L53 13 L53 23 L43 23z" fill="#c88d55"/>
 <path d="M53 5.5 Q54 5 56 5 L73 5.5 L73 11 L82 11.5 L82 40 L40 40 L40 22 L53 22z" fill="url(#bd)"/>
 <rect x="63.5" y="7.5" width="2" height="2" fill="#7a4a25"/>
 <rect x="69.5" y="7.5" width="2" height="2" fill="#7a4a25"/>
 <rect x="65" y="12" width="3" height="6" fill="#8d5b31"/>
 <path d="M70 11.5 L82 11.5 L82 32 L70 32z" fill="#b8793f"/>
 <rect x="74.4" y="24" width="4.6" height="8" fill="#f4dfc4"/>
 <path d="M43 22 L70 22 L70 35 L43 40z" fill="#efd6b0"/>
 <path d="M43 28 L56 30 L56 40 L43 40z" fill="#c99360"/>
 <path d="M21.5 5.5 Q30 2.5 43 7 L43 37 Q33 39 21.5 37z" fill="url(#tw)"/>
 <rect x="29" y="12" width="6" height="10" fill="#f6e3cb"/>
 <rect x="29" y="12" width="1.5" height="10" fill="#b07040"/>
 <path d="M5 40 L6 30 Q14 25 21.5 25 L21.5 40z" fill="#e0ac76"/>
 <path d="M9 30 L21.5 33 L30 40 L9 40z" fill="#c4854c"/>
 <path d="M59.5 25 L51.5 38 M62 25.5 L54 38.5 M58.3 28h3 M56.6 31h3 M55 34h3 M53.4 37h3" stroke="#5b3a1e" stroke-width="1.1"/>
</svg>
<!-- chrome -->
<svg style="left:407px;top:736px" width="24" height="24" viewBox="0 0 24 24">
 <path d="M12 12 L1.6 6 A12 12 0 0 1 22.4 6z" fill="#db4437"/>
 <path d="M12 12 L22.4 6 A12 12 0 0 1 12 24z" fill="#f4c20d"/>
 <path d="M12 12 L12 24 A12 12 0 0 1 1.6 6z" fill="#0f9d58"/>
 <circle cx="12" cy="12" r="5.4" fill="#fff"/>
 <circle cx="12" cy="12" r="4.3" fill="#4285f4"/>
</svg>
<div class="a" style="left:399px;top:765px;width:40px;height:3px;background:#76b9ed"></div>
<!-- folder -->
<svg style="left:457px;top:738px" width="22" height="19" viewBox="0 0 22 19">
 <path d="M0 1.5 Q0 0 1.5 0 H7.5 L9.5 2 H22 V18.5 H0z" fill="#e8b84a"/>
 <rect x="0" y="4" width="22" height="14.5" fill="#fcd667"/>
 <path d="M6 18.5 V12 H16 V18.5 H13.5 V14.5 H8.5 V18.5z" fill="#3b88d8"/>
</svg>
<!-- mail -->
<svg style="left:505px;top:736px" width="25" height="23" viewBox="0 0 25 23">
 <path d="M0 8 L12.5 0 L25 8z" fill="#1a6fc9"/>
 <rect x="0" y="8" width="25" height="15" fill="#2a9cf0"/>
 <path d="M0 8 L12.5 16 L25 8z" fill="#e9f4fd"/>
 <path d="M0 23 L12.5 14 L25 23z" fill="#43b0f5"/>
</svg>
<div class="a" style="left:497px;top:766px;width:40px;height:2px;background:#76b9ed"></div>
<!-- word -->
<svg style="left:554px;top:736px" width="25" height="23" viewBox="0 0 25 23">
 <rect x="6" y="0" width="19" height="23" rx="1.5" fill="#41a5ee"/>
 <rect x="6" y="6" width="19" height="6" fill="#2b7cd3"/>
 <rect x="6" y="12" width="19" height="6" fill="#185abd"/>
 <rect x="6" y="18" width="19" height="5" fill="#103f91"/>
 <rect x="0" y="5" width="13" height="13" rx="1" fill="#185abd"/>
 <text x="1.6" y="15.5" font-family="Liberation Sans" font-weight="700" font-size="10" fill="#fff">W</text>
</svg>
<div class="a" style="left:546px;top:766px;width:40px;height:2px;background:#76b9ed"></div>
<!-- excel -->
<svg style="left:602px;top:736px" width="25" height="23" viewBox="0 0 25 23">
 <rect x="6" y="0" width="19" height="23" rx="1.5" fill="#21a366"/>
 <rect x="15" y="0" width="10" height="11.5" fill="#33c481"/>
 <rect x="6" y="11.5" width="19" height="11.5" fill="#107c41"/>
 <rect x="15" y="11.5" width="10" height="6" fill="#185c37" opacity="0.4"/>
 <rect x="0" y="5" width="13" height="13" rx="1" fill="#107c41"/>
 <text x="2.5" y="15.5" font-family="Liberation Sans" font-weight="700" font-size="10" fill="#fff">X</text>
</svg>
<div class="a" style="left:591px;top:766px;width:48px;height:2px;background:#76b9ed"></div>
<!-- edge -->
<svg style="left:651px;top:736px" width="25" height="24" viewBox="0 0 25 24">
 <circle cx="12.5" cy="12" r="12" fill="#1a7fd6"/>
 <path d="M3 6 Q10 -2 20 2 Q26 6 24.5 13 Q22 17 16 16 Q11 15 13 11 Q14 7 9 7 Q5 7 3 10z" fill="#37c36d"/>
 <path d="M24.5 13 Q22 17 16 16 Q11 15 13 11 Q12 9 9.5 9.5 Q5 11 6 16 Q8 22 14 23.5 Q20 23 23 19z" fill="#0c59a4"/>
 <circle cx="14" cy="13" r="3" fill="#1f2e39"/>
</svg>
<!-- store -->
<svg style="left:700px;top:736px" width="25" height="25" viewBox="0 0 25 25">
 <path d="M7 6 V3.5 Q7 1 9.5 1 H15.5 Q18 1 18 3.5 V6" fill="none" stroke="#36a3e8" stroke-width="1.6"/>
 <rect x="0.5" y="5.5" width="24" height="19" rx="3" fill="#f3f3f3"/>
 <rect x="8" y="10" width="4" height="4" fill="#f25022"/>
 <rect x="12.7" y="10" width="4" height="4" fill="#7fba00"/>
 <rect x="8" y="14.7" width="4" height="4" fill="#00a4ef"/>
 <rect x="12.7" y="14.7" width="4" height="4" fill="#ffb900"/>
</svg>
<!-- tray -->
<svg style="left:1122px;top:744px" width="14" height="8" viewBox="0 0 14 8"><path d="M1 7.5L7 1.5L13 7.5" fill="none" stroke="#fff" stroke-width="1.2"/></svg>
<svg style="left:1147px;top:739px" width="13" height="18" viewBox="0 0 13 18">
 <path d="M2 3 Q4 0.5 8 1 M2 15 Q4 17.5 8 17" fill="none" stroke="#ddd" stroke-width="1"/>
 <rect x="1.5" y="5.5" width="7" height="7" rx="1" fill="none" stroke="#fff" stroke-width="1.1"/>
 <path d="M8.5 8 L12 6 V12 L8.5 10" fill="none" stroke="#fff" stroke-width="1"/>
</svg>
<svg style="left:1168px;top:741px" width="18" height="15" viewBox="0 0 18 15">
 <path d="M3.5 2.5h13v9h-13z M10 11.5v3M6.5 14.5h7" fill="none" stroke="#fff" stroke-width="1.1"/>
 <rect x="0.5" y="0.5" width="6" height="5" fill="#1f2e39" stroke="#fff" stroke-width="1"/>
</svg>
<svg style="left:1192px;top:741px" width="18" height="15" viewBox="0 0 18 15">
 <path d="M1 5h3l4-3.5v12L4 10H1z" fill="none" stroke="#fff" stroke-width="1.1"/>
 <path d="M10.5 5 Q12 7.5 10.5 10 M13 3 Q15.5 7.5 13 12 M15.5 1 Q19 7.5 15.5 14" fill="none" stroke="#fff" stroke-width="1"/>
</svg>
<svg style="left:1324px;top:739px" width="19" height="18" viewBox="0 0 19 18">
 <path d="M1.5 1.5h15v11h-5.5l-2.5 3-2.5-3h-4.5z" fill="none" stroke="#fff" stroke-width="1.2"/>
</svg>
<div class="a" style="left:1360px;top:728px;width:1px;height:40px;background:#4a5a66"></div>
<!-- selection -->
<div class="a" style="left:25px;top:531px;width:730px;height:26px;border:2px solid #217346"></div>
<div class="a" style="left:750px;top:552px;width:7px;height:7px;background:#217346;border:1px solid #fff"></div>


<div class="x" style="left:536.74px;top:9.70px;font-size:12.5px;color:#ffffff;transform:scaleX(0.8597);">DATOS REQUERIDOS 2022 VALLE HERMOSO (1)  -  Excel</div>
<div class="x" style="left:942.60px;top:9.70px;font-size:12.5px;color:#ffffff;transform:scaleX(0.8681);">GAD PARROQUIAL VALLE HERMOSO</div>
<div class="x" style="left:13.10px;top:43.20px;font-size:12.6px;color:#f4f8f5;transform:scaleX(0.9693);">Archivo</div>
<div class="x" style="left:136.07px;top:43.20px;font-size:12.6px;color:#f4f8f5;transform:scaleX(0.9325);">Insertar</div>
<div class="x" style="left:202.56px;top:43.20px;font-size:12.6px;color:#f4f8f5;transform:scaleX(0.9418);">Disposición de página</div>
<div class="x" style="left:345.14px;top:43.20px;font-size:12.6px;color:#f4f8f5;transform:scaleX(0.9553);">Fórmulas</div>
<div class="x" style="left:421.25px;top:43.20px;font-size:12.6px;color:#f4f8f5;transform:scaleX(0.9461);">Datos</div>
<div class="x" style="left:478.42px;top:43.20px;font-size:12.6px;color:#f4f8f5;transform:scaleX(0.8845);">Revisar</div>
<div class="x" style="left:542.90px;top:43.20px;font-size:12.6px;color:#f4f8f5;transform:scaleX(0.8968);">Vista</div>
<div class="x" style="left:595.00px;top:43.20px;font-size:12.6px;color:#f4f8f5;transform:scaleX(0.9499);">Ayuda</div>
<div class="x" style="left:655.52px;top:43.20px;font-size:12.6px;color:#f4f8f5;transform:scaleX(0.9757);">Nitro Pro</div>
<div class="x" style="left:759.50px;top:43.20px;font-size:12.6px;color:#f4f8f5;transform:scaleX(0.8607);">¿Qué desea hacer?</div>
<div class="x" style="left:1288.50px;top:43.20px;font-size:12.6px;color:#f4f8f5;transform:scaleX(0.9712);">Compartir</div>
<div class="x" style="left:80.51px;top:43.20px;font-size:12.6px;color:#3a5a45;transform:scaleX(0.9931);">Inicio</div>
<div class="x" style="left:4.60px;top:143.00px;font-size:11.2px;color:#262626;-webkit-text-stroke:0.1px currentColor;transform:scaleX(0.9889);">Portapapeles</div>
<div class="x" style="left:173.70px;top:143.30px;font-size:11.2px;color:#262626;-webkit-text-stroke:0.1px currentColor;">Fuente</div>
<div class="x" style="left:415.00px;top:143.00px;font-size:11.2px;color:#262626;-webkit-text-stroke:0.1px currentColor;transform:scaleX(1.0447);">Alineación</div>
<div class="x" style="left:639.80px;top:142.80px;font-size:11.2px;color:#262626;-webkit-text-stroke:0.1px currentColor;">Número</div>
<div class="x" style="left:834.20px;top:143.10px;font-size:11.2px;color:#262626;-webkit-text-stroke:0.1px currentColor;transform:scaleX(0.9653);">Estilos</div>
<div class="x" style="left:1021.60px;top:143.30px;font-size:11.2px;color:#262626;-webkit-text-stroke:0.1px currentColor;transform:scaleX(0.9367);">Celdas</div>
<div class="x" style="left:1188.50px;top:143.00px;font-size:11.2px;color:#262626;-webkit-text-stroke:0.1px currentColor;transform:scaleX(1.0090);">Edición</div>
<div class="x" style="left:14.50px;top:107.70px;font-size:11.5px;color:#262626;-webkit-text-stroke:0.1px currentColor;transform:scaleX(0.9495);">Pegar</div>
<div class="x" style="left:104.80px;top:82.00px;font-size:11.8px;color:#262626;-webkit-text-stroke:0.1px currentColor;transform:scaleX(1.0058);">Calibri</div>
<div class="x" style="left:215.90px;top:82.00px;font-size:11.8px;color:#262626;-webkit-text-stroke:0.1px currentColor;transform:scaleX(0.8333);">10</div>
<div class="x" style="left:465.00px;top:82.00px;font-size:11.8px;color:#262626;-webkit-text-stroke:0.1px currentColor;transform:scaleX(1.0120);">Ajustar texto</div>
<div class="x" style="left:465.00px;top:113.30px;font-size:11.8px;color:#262626;-webkit-text-stroke:0.1px currentColor;transform:scaleX(1.0161);">Combinar y centrar</div>
<div class="x" style="left:606.50px;top:81.80px;font-size:11.8px;color:#262626;-webkit-text-stroke:0.1px currentColor;transform:scaleX(0.9505);">General</div>
<div class="x" style="left:765.80px;top:107.80px;font-size:11.5px;color:#262626;-webkit-text-stroke:0.1px currentColor;transform:scaleX(1.0325);">Formato</div>
<div class="x" style="left:752.90px;top:124.10px;font-size:11.5px;color:#262626;-webkit-text-stroke:0.1px currentColor;transform:scaleX(1.0687);">condicional</div>
<div class="x" style="left:829.40px;top:107.80px;font-size:11.5px;color:#262626;-webkit-text-stroke:0.1px currentColor;transform:scaleX(1.0412);">Dar formato</div>
<div class="x" style="left:827.80px;top:124.10px;font-size:11.5px;color:#262626;-webkit-text-stroke:0.1px currentColor;transform:scaleX(1.0342);">como tabla</div>
<div class="x" style="left:900.70px;top:107.80px;font-size:11.5px;color:#262626;-webkit-text-stroke:0.1px currentColor;transform:scaleX(0.9846);">Estilos de</div>
<div class="x" style="left:907.50px;top:124.10px;font-size:11.5px;color:#262626;-webkit-text-stroke:0.1px currentColor;transform:scaleX(0.9574);">celda</div>
<div class="x" style="left:969.19px;top:107.90px;font-size:11.5px;color:#262626;-webkit-text-stroke:0.1px currentColor;transform:scaleX(1.0116);">Insertar</div>
<div class="x" style="left:1014.50px;top:107.90px;font-size:11.5px;color:#262626;-webkit-text-stroke:0.1px currentColor;transform:scaleX(1.0142);">Eliminar</div>
<div class="x" style="left:1062.60px;top:107.90px;font-size:11.5px;color:#262626;-webkit-text-stroke:0.1px currentColor;transform:scaleX(1.0372);">Formato</div>
<div class="x" style="left:1163.00px;top:108.30px;font-size:11.5px;color:#262626;-webkit-text-stroke:0.1px currentColor;transform:scaleX(1.0120);">Ordenar y</div>
<div class="x" style="left:1171.00px;top:124.10px;font-size:11.5px;color:#262626;-webkit-text-stroke:0.1px currentColor;transform:scaleX(1.0379);">filtrar</div>
<div class="x" style="left:1232.60px;top:108.30px;font-size:11.5px;color:#262626;-webkit-text-stroke:0.1px currentColor;transform:scaleX(0.9603);">Buscar y</div>
<div class="x" style="left:1220.00px;top:124.10px;font-size:11.5px;color:#262626;-webkit-text-stroke:0.1px currentColor;transform:scaleX(1.0113);">seleccionar</div>
<div class="x" style="left:12.40px;top:174.60px;font-size:12px;color:#262626;transform:scaleX(1.0333);">A19</div>
<div class="x" style="left:262.80px;top:175.80px;font-size:12.6px;color:#333;transform:scaleX(0.9771);">UNIDAD POSEEDORA DE LA INFORMACIÓN - LITERAL k):</div>
<div class="x" style="left:112.33px;top:685.70px;font-size:12.3px;color:#ffffff;transform:scaleX(1.0686);">Datos</div>
<div class="x" style="left:172.63px;top:685.70px;font-size:12.3px;color:#444;transform:scaleX(1.0656);">NOMINA</div>
<div class="x" style="left:252.31px;top:685.70px;font-size:12.3px;color:#444;transform:scaleX(0.9924);">INFIMAS</div>
<div class="x" style="left:328.50px;top:685.70px;font-size:12.3px;color:#444;transform:scaleX(0.9852);">G 2020</div>
<div class="x" style="left:393.70px;top:685.70px;font-size:12.3px;color:#217346;font-weight:700;transform:scaleX(1.0679);">literal k LOTAIP (2)</div>
<div class="x" style="left:536.20px;top:685.70px;font-size:12.3px;color:#444;transform:scaleX(1.0057);">Anexos</div>
<div class="x" style="left:603.41px;top:685.70px;font-size:12.3px;color:#444;transform:scaleX(0.9914);">RESUMEN</div>
<div class="x" style="left:1331.30px;top:712.00px;font-size:11.5px;color:#444;transform:scaleX(0.8995);">71%</div>
<div class="x" style="left:87.57px;top:741.50px;font-size:14px;color:#2b2b2b;transform:scaleX(1.0350);">Escribe aquí para buscar</div>
<div class="x" style="left:1221.70px;top:741.70px;font-size:12px;color:#ffffff;transform:scaleX(0.7289);">ESP</div>
<div class="x" style="left:1267.90px;top:732.60px;font-size:12px;color:#ffffff;transform:scaleX(0.8532);">16:10</div>
<div class="x" style="left:1252.90px;top:750.70px;font-size:12px;color:#ffffff;transform:scaleX(0.9598);">16/11/2022</div>
<div class="x" style="left:29.60px;top:240.00px;font-size:10.5px;color:#000;font-weight:700;-webkit-text-stroke:0.3px currentColor;transform:scaleX(1.0782);">SOCIOCULTURA</div>
<div class="x" style="left:29.60px;top:254.30px;font-size:10.5px;color:#000;font-weight:700;-webkit-text-stroke:0.3px currentColor;transform:scaleX(0.9857);">L</div>
<div class="x" style="left:131.00px;top:228.20px;font-size:9.2px;color:#000;transform:scaleX(1.1132);">Asistencia ante desastres</div>
<div class="x" style="left:131.00px;top:242.20px;font-size:9.2px;color:#000;transform:scaleX(1.1004);">naturales y antrópicos, crisis</div>
<div class="x" style="left:131.00px;top:256.20px;font-size:9.2px;color:#000;transform:scaleX(1.1061);">sanitaria y contingencia a la</div>
<div class="x" style="left:131.00px;top:270.20px;font-size:9.2px;color:#000;transform:scaleX(1.1272);">ciudadanía de la parroquia.</div>
<div class="x" style="left:296.70px;top:241.70px;font-size:9.2px;color:#000;transform:scaleX(1.0900);">Asistir en los desastres naturales, crisis sanitarias</div>
<div class="x" style="left:296.70px;top:255.80px;font-size:9.2px;color:#000;transform:scaleX(1.1404);">y contingencias.</div>
<div class="x" style="left:527.40px;top:227.30px;font-size:9.2px;color:#111;transform:scaleX(1.1472);">Generar la Asistencia humanitaria por riesgos y</div>
<div class="x" style="left:541.40px;top:242.30px;font-size:9.2px;color:#111;transform:scaleX(1.1479);">emergencias naturales o antrópicas en la</div>
<div class="x" style="left:528.40px;top:257.20px;font-size:9.2px;color:#111;transform:scaleX(1.1200);">parroquia Simón Bolívar al menos al 40% de los</div>
<div class="x" style="left:615.80px;top:271.60px;font-size:9.2px;color:#111;transform:scaleX(1.1355);">afectados</div>
<div class="x" style="left:778.20px;top:248.00px;font-size:10.5px;color:#000;font-weight:700;-webkit-text-stroke:0.3px currentColor;transform:scaleX(1.1255);">1988,00</div>
<div class="x" style="left:867.40px;top:249.20px;font-size:9.8px;color:#111;font-weight:700;-webkit-text-stroke:0.3px currentColor;transform:scaleX(1.1632);">1/1/2022</div>
<div class="x" style="left:953.20px;top:249.20px;font-size:9.8px;color:#111;font-weight:700;-webkit-text-stroke:0.3px currentColor;transform:scaleX(1.1455);">31/12/2022</div>
<div class="x" style="left:30.10px;top:315.20px;font-size:10.5px;color:#000;font-weight:700;-webkit-text-stroke:0.3px currentColor;transform:scaleX(1.0632);">ASENTAMIENTO</div>
<div class="x" style="left:30.10px;top:329.00px;font-size:10.5px;color:#000;font-weight:700;-webkit-text-stroke:0.3px currentColor;transform:scaleX(1.0535);">S HUMANOS</div>
<div class="x" style="left:131.10px;top:317.20px;font-size:9.2px;color:#000;transform:scaleX(1.1099);">Construcción y mejoramiento de</div>
<div class="x" style="left:131.10px;top:331.00px;font-size:9.2px;color:#000;transform:scaleX(1.1089);">espacios públicos de la parroquia</div>
<div class="x" style="left:296.70px;top:310.00px;font-size:9.2px;color:#000;transform:scaleX(1.0905);">Conservar y mejorar los espacios públicos para la</div>
<div class="x" style="left:296.70px;top:324.00px;font-size:9.2px;color:#000;transform:scaleX(1.1087);">recreación y el ocio de los ciudadanos de la</div>
<div class="x" style="left:296.70px;top:338.10px;font-size:9.2px;color:#000;transform:scaleX(1.0904);">parroquia</div>
<div class="x" style="left:531.40px;top:310.00px;font-size:9.2px;color:#111;transform:scaleX(1.1369);">ncrementar en un 40% los  espacios públicos/</div>
<div class="x" style="left:549.00px;top:325.00px;font-size:9.2px;color:#111;transform:scaleX(1.1483);">recreativos y de uso comunitario en la</div>
<div class="x" style="left:615.80px;top:340.00px;font-size:9.2px;color:#111;transform:scaleX(1.1509);">parroquia</div>
<div class="x" style="left:778.20px;top:323.00px;font-size:10.5px;color:#000;font-weight:700;-webkit-text-stroke:0.3px currentColor;transform:scaleX(1.1255);">1400,00</div>
<div class="x" style="left:867.40px;top:324.20px;font-size:9.8px;color:#111;font-weight:700;-webkit-text-stroke:0.3px currentColor;transform:scaleX(1.1632);">1/1/2022</div>
<div class="x" style="left:953.20px;top:324.20px;font-size:9.8px;color:#111;font-weight:700;-webkit-text-stroke:0.3px currentColor;transform:scaleX(1.1455);">31/12/2022</div>
<div class="x" style="left:30.10px;top:389.90px;font-size:10.5px;color:#000;font-weight:700;-webkit-text-stroke:0.3px currentColor;transform:scaleX(1.0928);">POLÍTICO</div>
<div class="x" style="left:30.10px;top:404.00px;font-size:10.5px;color:#000;font-weight:700;-webkit-text-stroke:0.3px currentColor;transform:scaleX(1.0482);">INSTITUCIONAL</div>
<div class="x" style="left:131.10px;top:385.30px;font-size:9.2px;color:#000;transform:scaleX(1.1198);">Formación y participación</div>
<div class="x" style="left:131.10px;top:399.00px;font-size:9.2px;color:#000;transform:scaleX(1.1133);">ciudadana de la parroquia Simón</div>
<div class="x" style="left:131.10px;top:412.50px;font-size:9.2px;color:#000;transform:scaleX(1.0864);">Bolívar</div>
<div class="x" style="left:296.70px;top:371.20px;font-size:9.2px;color:#000;transform:scaleX(1.1315);">Promover la ciudadanía activa con conocimiento</div>
<div class="x" style="left:296.70px;top:385.20px;font-size:9.2px;color:#000;transform:scaleX(1.1110);">en administración pública, los mecanismos de</div>
<div class="x" style="left:296.70px;top:399.00px;font-size:9.2px;color:#000;transform:scaleX(1.1152);">participación, las normativas vigentes que</div>
<div class="x" style="left:296.70px;top:413.00px;font-size:9.2px;color:#000;transform:scaleX(1.0956);">impulsan la democracia y los instrumentos</div>
<div class="x" style="left:296.70px;top:426.70px;font-size:9.2px;color:#000;transform:scaleX(1.1395);">internacionales.</div>
<div class="x" style="left:543.70px;top:377.00px;font-size:9.2px;color:#111;transform:scaleX(1.1588);">Promover un instrumento articulado a la</div>
<div class="x" style="left:530.50px;top:391.90px;font-size:9.2px;color:#111;transform:scaleX(1.1498);">planificación nacional y local en la ciudadanía</div>
<div class="x" style="left:554.30px;top:406.80px;font-size:9.2px;color:#111;transform:scaleX(1.1496);">de la parroquia-Plan de desarrollo y</div>
<div class="x" style="left:579.40px;top:421.80px;font-size:9.2px;color:#111;transform:scaleX(1.2149);">ordenamiento Territorial</div>
<div class="x" style="left:773.80px;top:398.00px;font-size:10.5px;color:#000;font-weight:700;-webkit-text-stroke:0.3px currentColor;transform:scaleX(1.1830);">55320,54</div>
<div class="x" style="left:867.40px;top:399.30px;font-size:9.8px;color:#111;font-weight:700;-webkit-text-stroke:0.3px currentColor;transform:scaleX(1.1632);">1/1/2022</div>
<div class="x" style="left:953.20px;top:399.30px;font-size:9.8px;color:#111;font-weight:700;-webkit-text-stroke:0.3px currentColor;transform:scaleX(1.1455);">31/12/2022</div>
<div class="x" style="left:288.20px;top:455.10px;font-size:9.2px;color:#111;font-weight:700;-webkit-text-stroke:0.3px currentColor;transform:scaleX(0.9480);">TOTAL PLANES Y PROGRAMAS EN EJECUCIÓN</div>
<div class="x" style="left:795.60px;top:453.10px;font-size:10.5px;color:#111;font-weight:700;-webkit-text-stroke:0.3px currentColor;transform:scaleX(0.9942);">92.077,55</div>
<div class="x" style="left:30.00px;top:488.20px;font-size:9.8px;color:#000;font-weight:700;-webkit-text-stroke:0.3px currentColor;transform:scaleX(1.1055);">FECHA ACTUALIZACIÓN DE LA INFORMACIÓN:</div>
<div class="x" style="left:998.50px;top:481.80px;font-size:9.6px;color:#000;transform:scaleX(1.0657);">DD/MM/AAAA</div>
<div class="x" style="left:1011.30px;top:493.80px;font-size:9.6px;color:#000;transform:scaleX(0.8453);">16/11/2022</div>
<div class="x" style="left:30.00px;top:516.00px;font-size:9.8px;color:#000;font-weight:700;-webkit-text-stroke:0.3px currentColor;transform:scaleX(1.1078);">PERIODICIDAD DE ACTUALIZACIÓN DE LA INFORMACIÓN:</div>
<div class="x" style="left:1008.80px;top:515.90px;font-size:9.6px;color:#000;transform:scaleX(0.9629);">MENSUAL</div>
<div class="x" style="left:30.00px;top:539.00px;font-size:9.8px;color:#000;font-weight:700;-webkit-text-stroke:0.3px currentColor;transform:scaleX(1.1031);">UNIDAD POSEEDORA DE LA INFORMACIÓN - LITERAL k):</div>
<div class="x" style="left:1004.30px;top:538.90px;font-size:9.6px;color:#000;transform:scaleX(0.9582);">TESORERÍA</div>
<div class="x" style="left:29.80px;top:562.00px;font-size:9.8px;color:#000;font-weight:700;-webkit-text-stroke:0.3px currentColor;transform:scaleX(1.1003);">RESPONSABLE DE LA UNIDAD POSEEDORA DE LA INFORMACIÓN DEL LITERAL k):</div>
<div class="x" style="left:974.60px;top:561.70px;font-size:9.6px;color:#000;transform:scaleX(0.9887);">LCDA. MARIBEL LOZADA</div>
<div class="x" style="left:29.80px;top:584.90px;font-size:9.8px;color:#000;font-weight:700;-webkit-text-stroke:0.3px currentColor;transform:scaleX(1.0964);">CORREO ELECTRÓNICO DEL O LA RESPONSABLE DE LA UNIDAD POSEEDORA DE LA INFORMACIÓN:</div>
<div class="x" style="left:945.30px;top:585.10px;font-size:9.6px;color:#0b5cad;transform:scaleX(1.0901);text-decoration:underline;">secretaria@gadvallehermoso.gob.ec</div>
<div class="x" style="left:29.80px;top:607.90px;font-size:9.8px;color:#000;font-weight:700;-webkit-text-stroke:0.3px currentColor;transform:scaleX(1.0967);">NÚMERO TELEFÓNICO DEL O LA RESPONSABLE DE LA UNIDAD POSEEDORA DE LA INFORMACIÓN:</div>
<div class="x" style="left:1003.70px;top:607.80px;font-size:9.6px;color:#000;transform:scaleX(0.9227);">(02) 2773-300</div>
<div class="x" style="left:29.80px;top:639.70px;font-size:10.5px;color:#d00000;font-weight:700;-webkit-text-stroke:0.3px currentColor;transform:scaleX(1.0698);">NOTA:</div>
<div class="x" style="left:68.70px;top:641.00px;font-size:9.4px;color:#c80000;transform:scaleX(1.0820);">Se recuerda a las entidades que si no dispone de un Plan Anual de Inversiones aprobado por SENPLADES, deberá incluir una nota aclaratoria como la que se describe a continuación: &quot;NO APLICA&quot;, debido a que  la (nombre completo de la entidad)  no presentó a la</div>
</body></html>
